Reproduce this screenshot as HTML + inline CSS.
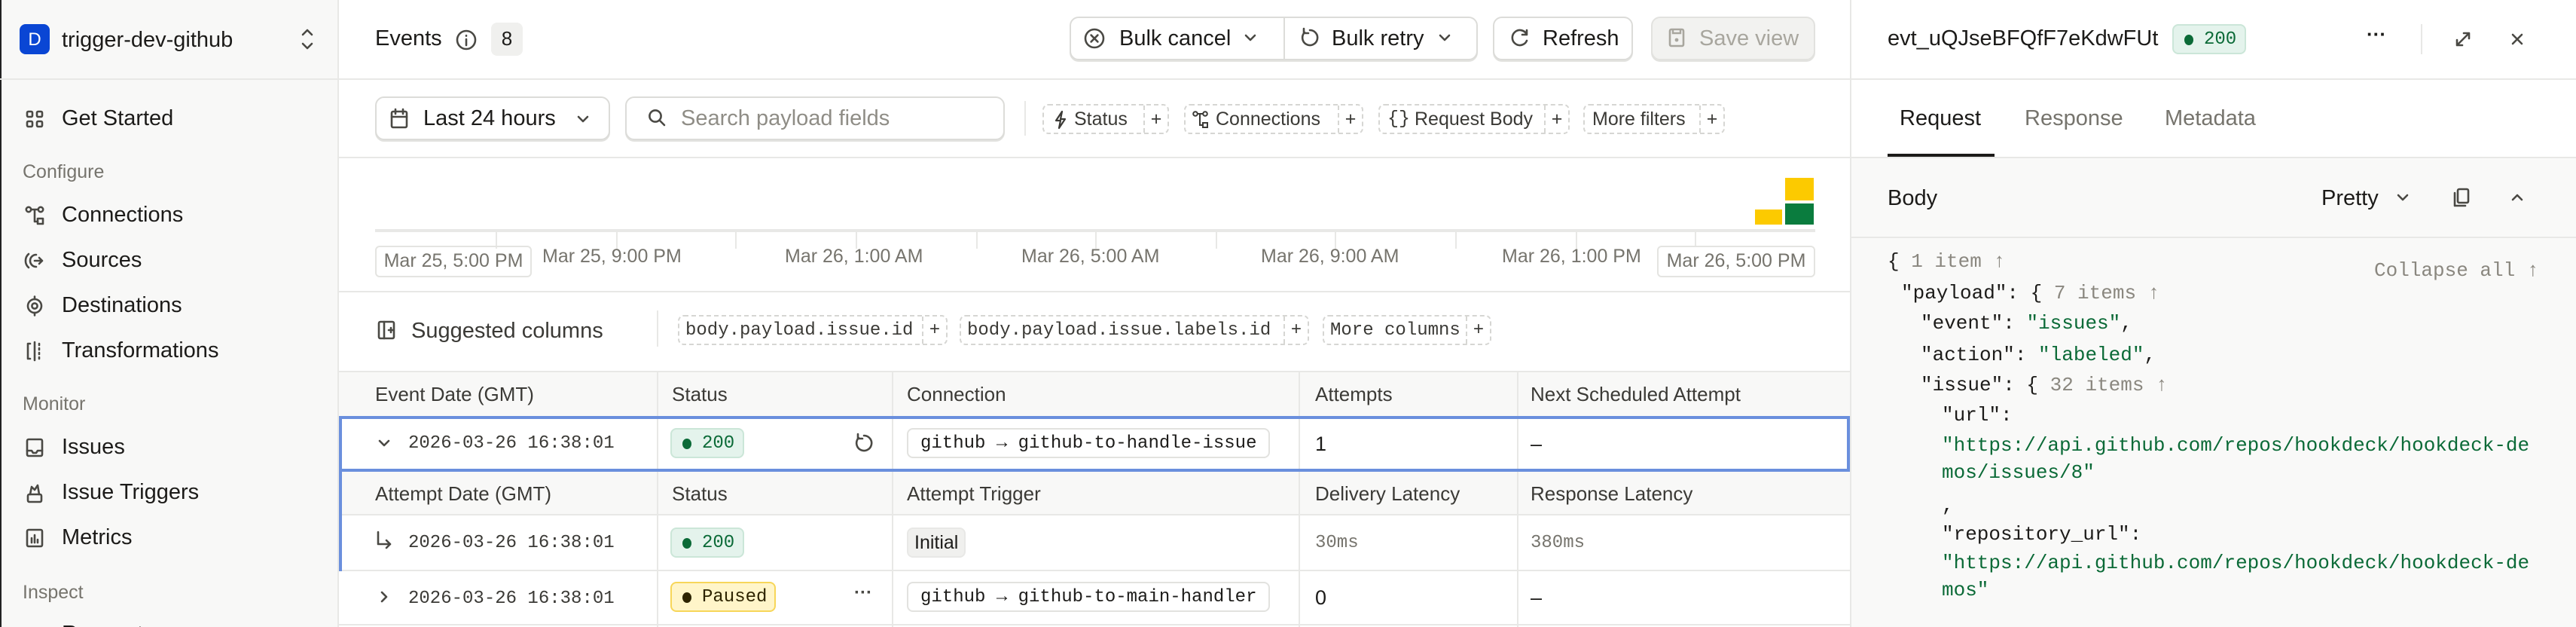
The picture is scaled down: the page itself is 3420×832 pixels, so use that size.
<!DOCTYPE html>
<html><head><meta charset="utf-8">
<style>
*{box-sizing:border-box;margin:0;padding:0}
html,body{width:3420px;height:832px;overflow:hidden;background:#fff}
#r{position:absolute;left:0;top:0;width:1710px;height:416px;overflow:hidden;transform:scale(2);transform-origin:0 0;font-family:"Liberation Sans",sans-serif;color:#1c1b19;font-size:14px;background:#fff}
.a{position:absolute;white-space:nowrap}
.m{font-family:"Liberation Mono",monospace}
.mut{color:#76746d}
.hl{position:absolute;height:1px;background:#e8e8e6}
.vl{position:absolute;width:1px;background:#e8e8e6}
.btn{position:absolute;border:1px solid #dcdcd9;border-radius:6px;background:#fff;box-shadow:0 1px 0 #e2e2df}
.chip{position:absolute;border:1px dashed #d6d6d3;border-radius:4px;height:20px;line-height:18px;font-size:12.5px;color:#3b3a36}
.chip .p{position:absolute;right:0;top:0;width:16px;height:18px;border-left:1px dashed #d6d6d3;text-align:center;color:#3b3a36}
.badge{position:absolute;height:20px;border-radius:4px;font-family:"Liberation Mono",monospace;font-size:12px;line-height:18px;padding-left:20px;padding-right:5px}
.g{background:#e4f3ec;border:1px solid #cbe6d8;color:#0b6a37}
.g:before,.y:before{content:"";position:absolute;left:7px;top:6px;width:6px;height:7px;border-radius:50%;background:#0b6a37}
.y{background:#fff5c9;border:1px solid #f7d659;color:#2d2400;font-family:"Liberation Mono",monospace}
.y:before{background:#2d2400}
.conn{position:absolute;height:20px;border:1px solid #e2e2df;border-radius:4px;font-family:"Liberation Mono",monospace;font-size:12px;line-height:18px;padding:0 8px;background:#fff}
svg{position:absolute}
.ic{fill:none;stroke:#4a4944;stroke-width:1.3;stroke-linecap:round;stroke-linejoin:round}
.js{font-family:"Liberation Mono",monospace;font-size:13px;color:#1c1b19}
.s{color:#0b6a37}
.c{color:#8a877f}
</style></head><body><div id="r">

<!-- SIDEBAR -->
<div class="a" style="left:0;top:0;width:225px;height:416px;background:#f8f8f7;border-left:1px solid #222;border-right:1px solid #e8e8e6"></div>
<div class="hl" style="left:0;top:52px;width:225px"></div>
<div class="a" style="left:13px;top:16px;width:20px;height:20px;background:#0a46d4;border-radius:4px;color:#fff;font-size:12px;line-height:20px;text-align:center">D</div>
<div class="a" style="left:41px;top:17px;line-height:20px;font-size:14.5px">trigger-dev-github</div>
<svg style="left:198px;top:17px" width="12" height="18"><path class="ic" d="M3 6l3-3 3 3M3 12l3 3 3-3"/></svg>

<svg style="left:16px;top:72px" width="14" height="14"><rect class="ic" x="2" y="2" width="3.5" height="3.5" rx=".8"/><rect class="ic" x="8.5" y="2" width="3.5" height="3.5" rx=".8"/><rect class="ic" x="2" y="8.5" width="3.5" height="3.5" rx=".8"/><rect class="ic" x="8.5" y="8.5" width="3.5" height="3.5" rx=".8"/></svg>
<div class="a" style="left:41px;top:71px;font-size:14.5px">Get Started</div>
<div class="a mut" style="left:15px;top:107px;font-size:12.5px">Configure</div>
<svg style="left:16px;top:136px" width="14" height="14"><circle class="ic" cx="3" cy="3" r="1.6"/><circle class="ic" cx="11" cy="3" r="1.6"/><rect class="ic" x="9" y="9" width="3.5" height="3.5"/><path class="ic" d="M4.6 3h4.8M7 3v8h2"/></svg>
<div class="a" style="left:41px;top:135px;font-size:14.5px">Connections</div>
<svg style="left:16px;top:166px" width="14" height="14"><path class="ic" d="M3 2.5a6 6 0 0 0 0 9M8 3a4 4 0 1 0 0 8M7 7h5M10 5l2 2-2 2"/></svg>
<div class="a" style="left:41px;top:165px;font-size:14.5px">Sources</div>
<svg style="left:16px;top:196px" width="14" height="14"><circle class="ic" cx="7" cy="7" r="4.5"/><circle class="ic" cx="7" cy="7" r="1.8"/><path class="ic" d="M7 .8v1.7M7 11.5v1.7"/></svg>
<div class="a" style="left:41px;top:195px;font-size:14.5px">Destinations</div>
<svg style="left:16px;top:226px" width="14" height="14"><path class="ic" d="M4 2H2.5v10H4M7 1v12M10 2v1M10 5v1M10 8v1M10 11v1"/></svg>
<div class="a" style="left:41px;top:225px;font-size:14.5px">Transformations</div>
<div class="a mut" style="left:15px;top:261px;font-size:12.5px">Monitor</div>
<svg style="left:16px;top:290px" width="14" height="14"><rect class="ic" x="2" y="1.5" width="10" height="11" rx="1"/><path class="ic" d="M2 9h3l1 1.5h2L9 9h3"/></svg>
<div class="a" style="left:41px;top:289px;font-size:14.5px">Issues</div>
<svg style="left:16px;top:320px" width="14" height="14"><rect class="ic" x="2.5" y="8" width="9" height="5" rx="1"/><path class="ic" d="M4 8l1-5 2 2 2-3 1 6"/></svg>
<div class="a" style="left:41px;top:319px;font-size:14.5px">Issue Triggers</div>
<svg style="left:16px;top:350px" width="14" height="14"><rect class="ic" x="2" y="1.5" width="10" height="11" rx="1"/><path class="ic" d="M5 10V7M7 10V5M9 10V8"/></svg>
<div class="a" style="left:41px;top:349px;font-size:14.5px">Metrics</div>
<div class="a mut" style="left:15px;top:386px;font-size:12.5px">Inspect</div>
<div class="a" style="left:41px;top:413px;font-size:14.5px">Requests</div>

<!-- TOP BAR -->
<div class="hl" style="left:225px;top:52px;width:1485px"></div>
<div class="a" style="left:249px;top:18px;font-size:14.5px">Events</div>
<svg style="left:302px;top:19px" width="15" height="15"><circle class="ic" cx="7.5" cy="7.5" r="6"/><path class="ic" d="M7.5 7v4M7.5 4.6v.2"/></svg>
<div class="a" style="left:326px;top:15px;width:21px;height:22px;background:#f0f0ee;border-radius:4px;text-align:center;line-height:22px;font-size:13px">8</div>

<div class="btn" style="left:710px;top:11px;width:271px;height:29px"></div>
<div class="vl" style="left:852px;top:12px;height:27px;background:#dcdcd9"></div>
<svg style="left:719px;top:18px" width="15" height="15"><circle class="ic" cx="7.5" cy="7.5" r="6"/><path class="ic" d="M5.3 5.3l4.4 4.4M9.7 5.3l-4.4 4.4"/></svg>
<div class="a" style="left:743px;top:18px;font-size:14.5px">Bulk cancel</div>
<svg style="left:825px;top:20px" width="10" height="10"><path class="ic" d="M2 3.5l3 3 3-3"/></svg>
<svg style="left:862px;top:18px" width="15" height="15"><path class="ic" d="M4 3.5a5 5 0 1 0 3.5-1.5M3.5 1v3h3"/></svg>
<div class="a" style="left:884px;top:18px;font-size:14.5px">Bulk retry</div>
<svg style="left:954px;top:20px" width="10" height="10"><path class="ic" d="M2 3.5l3 3 3-3"/></svg>

<div class="btn" style="left:991px;top:11px;width:93px;height:29px"></div>
<svg style="left:1002px;top:18px" width="14" height="14"><path class="ic" d="M11.5 5a5 5 0 1 0 0 4M11.5 2v3h-3"/></svg>
<div class="a" style="left:1024px;top:18px;font-size:14.5px">Refresh</div>

<div class="btn" style="left:1096px;top:11px;width:109px;height:29px;background:#f2f2f0;border-color:#e2e2df"></div>
<svg style="left:1106px;top:18px" width="14" height="14"><rect x="2.5" y="1.5" width="9" height="11" rx="1" fill="none" stroke="#a8a69e" stroke-width="1.3"/><circle cx="7" cy="8.5" r="1.2" fill="#a8a69e"/><path d="M4.5 1.5v2.5h5V1.5" fill="none" stroke="#a8a69e" stroke-width="1.2"/></svg>
<div class="a" style="left:1128px;top:18px;font-size:14.5px;color:#a8a69e">Save view</div>

<!-- FILTER ROW -->
<div class="hl" style="left:225px;top:104px;width:1003px"></div>
<div class="btn" style="left:249px;top:64px;width:156px;height:29px"></div>
<svg style="left:258px;top:71px" width="14" height="15"><rect class="ic" x="2" y="3" width="10" height="10.5" rx="1"/><path class="ic" d="M4.5 1.5v3M9.5 1.5v3M2 6.5h10"/></svg>
<div class="a" style="left:281px;top:71px;font-size:14.5px">Last 24 hours</div>
<svg style="left:382px;top:74px" width="10" height="10"><path class="ic" d="M2 3.5l3 3 3-3"/></svg>
<div class="btn" style="left:415px;top:64px;width:252px;height:29px"></div>
<svg style="left:429px;top:71px" width="14" height="14"><circle class="ic" cx="6" cy="6" r="3.8"/><path class="ic" d="M9 9l3 3"/></svg>
<div class="a" style="left:452px;top:71px;font-size:14.5px;color:#8f8d86">Search payload fields</div>
<div class="vl" style="left:680px;top:67px;height:23px"></div>
<div class="chip" style="left:692px;top:69px;width:84px"><svg style="left:6px;top:3px" width="10" height="13"><path d="M6 1L2 7h3l-1 5 4-6H5z" fill="none" stroke="#3b3a36" stroke-width="1.1" stroke-linejoin="round"/></svg><span class="a" style="left:20px;top:0">Status</span><div class="p">+</div></div>
<div class="chip" style="left:786px;top:69px;width:119px"><svg style="left:4px;top:3px" width="12" height="13"><circle cx="2.5" cy="2.5" r="1.4" fill="none" stroke="#3b3a36"/><circle cx="9" cy="2.5" r="1.4" fill="none" stroke="#3b3a36"/><rect x="7.5" y="8.5" width="3" height="3" fill="none" stroke="#3b3a36"/><path d="M4 2.5h3.6M5.5 2.5v7.5h2" fill="none" stroke="#3b3a36"/></svg><span class="a" style="left:20px;top:0">Connections</span><div class="p">+</div></div>
<div class="chip" style="left:915px;top:69px;width:127px"><span class="a" style="left:5px;top:0;font-family:'Liberation Mono',monospace">{}</span><span class="a" style="left:23px;top:0">Request Body</span><div class="p">+</div></div>
<div class="chip" style="left:1051px;top:69px;width:94px"><span class="a" style="left:5px;top:0">More filters</span><div class="p">+</div></div>

<!-- CHART -->
<div class="hl" style="left:249px;top:152px;width:956px;height:2px;background:#e8e8e6"></div>
<div class="vl" style="left:329px;top:153px;height:12px"></div>
<div class="vl" style="left:409px;top:153px;height:12px"></div>
<div class="vl" style="left:488px;top:153px;height:12px"></div>
<div class="vl" style="left:568px;top:153px;height:12px"></div>
<div class="vl" style="left:648px;top:153px;height:12px"></div>
<div class="vl" style="left:727px;top:153px;height:12px"></div>
<div class="vl" style="left:807px;top:153px;height:12px"></div>
<div class="vl" style="left:886px;top:153px;height:12px"></div>
<div class="vl" style="left:966px;top:153px;height:12px"></div>
<div class="vl" style="left:1046px;top:153px;height:12px"></div>
<div class="vl" style="left:1125px;top:153px;height:12px"></div>
<div class="a" style="left:1165px;top:139px;width:18px;height:10px;background:#fcca00"></div>
<div class="a" style="left:1185px;top:118px;width:19px;height:15px;background:#fcca00"></div>
<div class="a" style="left:1185px;top:135px;width:19px;height:14px;background:#0a7c3e"></div>
<div class="a mut" style="left:249px;top:163px;width:104px;height:21px;border:1px solid #e4e4e1;border-radius:3px;font-size:12.5px;line-height:19px;text-align:center">Mar 25, 5:00 PM</div>
<div class="a mut" style="left:360px;top:163px;font-size:12.5px">Mar 25, 9:00 PM</div>
<div class="a mut" style="left:521px;top:163px;font-size:12.5px">Mar 26, 1:00 AM</div>
<div class="a mut" style="left:678px;top:163px;font-size:12.5px">Mar 26, 5:00 AM</div>
<div class="a mut" style="left:837px;top:163px;font-size:12.5px">Mar 26, 9:00 AM</div>
<div class="a mut" style="left:997px;top:163px;font-size:12.5px">Mar 26, 1:00 PM</div>
<div class="a mut" style="left:1100px;top:163px;width:105px;height:21px;border:1px solid #e4e4e1;border-radius:3px;font-size:12.5px;line-height:19px;text-align:center;background:#fff">Mar 26, 5:00 PM</div>
<div class="hl" style="left:225px;top:193px;width:1003px"></div>

<!-- SUGGESTED -->
<svg style="left:250px;top:212px" width="14" height="14"><rect class="ic" x="1.5" y="1.5" width="10" height="11" rx="1"/><path class="ic" d="M5 1.5v11M8 7h3M9.5 5.5v3"/></svg>
<div class="a" style="left:273px;top:212px;font-size:14.5px;color:#3b3a36">Suggested columns</div>
<div class="vl" style="left:436px;top:206px;height:24px"></div>
<div class="chip m" style="left:450px;top:209px;width:179px;font-size:12px"><span class="a" style="left:4px;top:0">body.payload.issue.id</span><div class="p">+</div></div>
<div class="chip m" style="left:637px;top:209px;width:232px;font-size:12px"><span class="a" style="left:4px;top:0">body.payload.issue.labels.id</span><div class="p">+</div></div>
<div class="chip m" style="left:878px;top:209px;width:112px;font-size:12px"><span class="a" style="left:4px;top:0">More columns</span><div class="p">+</div></div>

<!-- TABLE -->
<div class="a" style="left:225px;top:246px;width:1003px;height:31px;background:#f8f8f7;border-top:1px solid #e8e8e6;border-bottom:1px solid #e8e8e6"></div>
<div class="a" style="left:249px;top:254px;font-size:13px;color:#3b3a36">Event Date (GMT)</div>
<div class="a" style="left:446px;top:254px;font-size:13px;color:#3b3a36">Status</div>
<div class="a" style="left:602px;top:254px;font-size:13px;color:#3b3a36">Connection</div>
<div class="a" style="left:873px;top:254px;font-size:13px;color:#3b3a36">Attempts</div>
<div class="a" style="left:1016px;top:254px;font-size:13px;color:#3b3a36">Next Scheduled Attempt</div>

<div class="a" style="left:225px;top:312px;width:1003px;height:30px;background:#f8f8f7;border-bottom:1px solid #e8e8e6"></div>
<div class="a" style="left:249px;top:320px;font-size:13px;color:#3b3a36">Attempt Date (GMT)</div>
<div class="a" style="left:446px;top:320px;font-size:13px;color:#3b3a36">Status</div>
<div class="a" style="left:602px;top:320px;font-size:13px;color:#3b3a36">Attempt Trigger</div>
<div class="a" style="left:873px;top:320px;font-size:13px;color:#3b3a36">Delivery Latency</div>
<div class="a" style="left:1016px;top:320px;font-size:13px;color:#3b3a36">Response Latency</div>
<div class="hl" style="left:225px;top:378px;width:1003px"></div>
<div class="hl" style="left:225px;top:414px;width:1003px"></div>

<div class="vl" style="left:436px;top:246px;height:170px"></div>
<div class="vl" style="left:592px;top:246px;height:170px"></div>
<div class="vl" style="left:862px;top:246px;height:170px"></div>
<div class="vl" style="left:1007px;top:246px;height:170px"></div>

<div class="a" style="left:225px;top:276px;width:1003px;height:37px;border:2px solid #6a8fdd"></div>
<div class="a" style="left:225px;top:312px;width:2px;height:67px;background:#6a8fdd"></div>

<svg style="left:250px;top:289px" width="10" height="10"><path class="ic" d="M2 3.5l3 3 3-3"/></svg>
<div class="a m" style="left:271px;top:287px;font-size:12px;color:#3b3a36">2026-03-26 16:38:01</div>
<div class="badge g" style="left:445px;top:284px">200</div>
<svg style="left:566px;top:287px" width="14" height="14"><path class="ic" d="M4 3.5a5 5 0 1 0 3.5-1.5M3.5 1v3h3"/></svg>
<div class="conn" style="left:602px;top:284px">github → github-to-handle-issue</div>
<div class="a" style="left:873px;top:287px;font-size:13.5px">1</div>
<div class="a" style="left:1016px;top:287px;font-size:13.5px">–</div>

<svg style="left:249px;top:352px" width="12" height="14"><path class="ic" d="M2 1v8h8M7.5 6.5L10 9l-2.5 2.5"/></svg>
<div class="a m" style="left:271px;top:353px;font-size:12px;color:#3b3a36">2026-03-26 16:38:01</div>
<div class="badge g" style="left:445px;top:350px">200</div>
<div class="a" style="left:602px;top:350px;height:20px;padding:0 4px;background:#f0f0ee;border:1px solid #e8e8e6;border-radius:4px;font-size:12.5px;line-height:18px">Initial</div>
<div class="a m mut" style="left:873px;top:353px;font-size:12px">30ms</div>
<div class="a m mut" style="left:1016px;top:353px;font-size:12px">380ms</div>

<svg style="left:250px;top:391px" width="10" height="10"><path class="ic" d="M3.5 2l3 3-3 3"/></svg>
<div class="a m" style="left:271px;top:390px;font-size:12px;color:#3b3a36">2026-03-26 16:38:01</div>
<div class="badge y" style="left:445px;top:386px;font-size:12px">Paused</div>
<div class="a" style="left:567px;top:386px;font-size:12px;font-weight:bold;color:#4a4944">···</div>
<div class="conn" style="left:602px;top:386px">github → github-to-main-handler</div>
<div class="a" style="left:873px;top:389px;font-size:13.5px">0</div>
<div class="a" style="left:1016px;top:389px;font-size:13.5px">–</div>

<!-- RIGHT PANEL -->
<div class="vl" style="left:1228px;top:0;height:416px"></div>
<div class="a" style="left:1253px;top:18px;font-size:14.5px">evt_uQJseBFQfF7eKdwFUt</div>
<div class="badge g" style="left:1442px;top:16px">200</div>
<div class="a" style="left:1571px;top:15px;font-size:13px;font-weight:bold">···</div>
<div class="vl" style="left:1607px;top:16px;height:20px"></div>
<svg style="left:1628px;top:19px" width="14" height="14"><path class="ic" d="M3 11l8-8M7.5 3H11v3.5M3 7.5V11h3.5"/></svg>
<svg style="left:1665px;top:20px" width="12" height="12"><path class="ic" d="M3 3l6 6M9 3l-6 6"/></svg>

<div class="a" style="left:1261px;top:71px;font-size:14.5px">Request</div>
<div class="a" style="left:1344px;top:71px;font-size:14.5px;color:#76746d">Response</div>
<div class="a" style="left:1437px;top:71px;font-size:14.5px;color:#76746d">Metadata</div>
<div class="a" style="left:1253px;top:102px;width:71px;height:2px;background:#1c1b19"></div>

<div class="a" style="left:1229px;top:104px;width:481px;height:312px;background:#f9f9f8;border-top:1px solid #e8e8e6"></div>
<div class="hl" style="left:1229px;top:157px;width:481px"></div>
<div class="a" style="left:1253px;top:124px;font-size:14.5px">Body</div>
<div class="a" style="left:1541px;top:124px;font-size:14.5px">Pretty</div>
<svg style="left:1590px;top:126px" width="10" height="10"><path class="ic" d="M2 3.5l3 3 3-3"/></svg>
<svg style="left:1627px;top:124px" width="14" height="15"><rect class="ic" x="4.5" y="1.5" width="7" height="9" rx="1"/><path class="ic" d="M2.5 4v8.5h7"/></svg>
<svg style="left:1666px;top:126px" width="10" height="10"><path class="ic" d="M2 6.5l3-3 3 3"/></svg>

<div class="a js" style="left:1253px;top:166px">{<span class="c"> 1 item ↑</span></div>
<div class="a js c" style="left:1576px;top:172px">Collapse all ↑</div>
<div class="a js" style="left:1262px;top:187px">"payload": {<span class="c"> 7 items ↑</span></div>
<div class="a js" style="left:1275px;top:207px">"event": <span class="s">"issues"</span>,</div>
<div class="a js" style="left:1275px;top:228px">"action": <span class="s">"labeled"</span>,</div>
<div class="a js" style="left:1275px;top:248px">"issue": {<span class="c"> 32 items ↑</span></div>
<div class="a js" style="left:1289px;top:268px">"url":</div>
<div class="a js s" style="left:1289px;top:288px">"https://api.github.com/repos/hookdeck/hookdeck-de</div>
<div class="a js s" style="left:1289px;top:306px">mos/issues/8"</div>
<div class="a js" style="left:1289px;top:328px">,</div>
<div class="a js" style="left:1289px;top:347px">"repository_url":</div>
<div class="a js s" style="left:1289px;top:366px">"https://api.github.com/repos/hookdeck/hookdeck-de</div>
<div class="a js s" style="left:1289px;top:384px">mos"</div>

</div></body></html>
